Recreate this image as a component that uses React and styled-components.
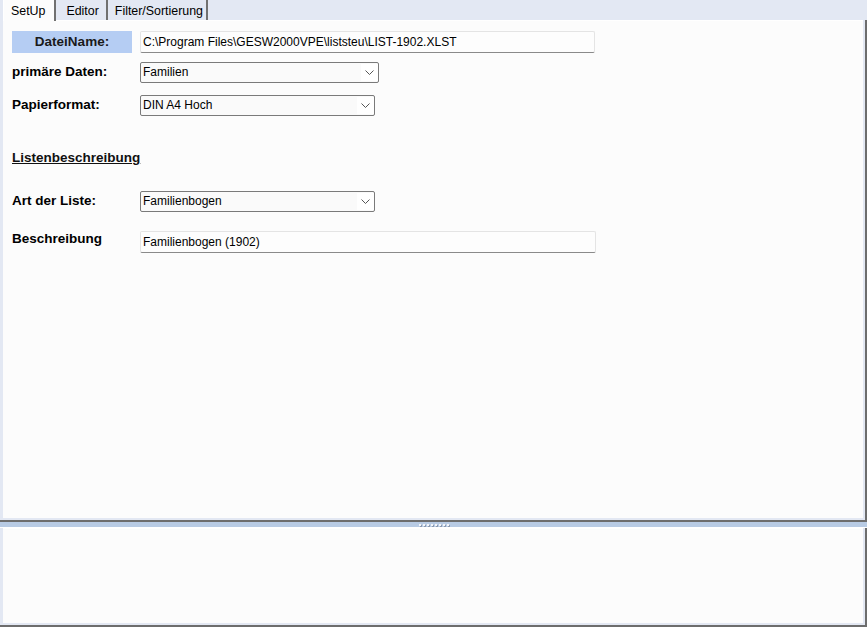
import React from "react";
import styled, { createGlobalStyle } from "styled-components";

const Global = createGlobalStyle`
  html, body { margin: 0; padding: 0; background: #e3e8f3; }
  body { font-family: "Liberation Sans", Arial, sans-serif; }
`;

const Window = styled.div`
  width: 867px;
  height: 627px;
  background: #e3e8f3;
  display: flex;
  flex-direction: column;
  overflow: hidden;
  font-family: "Liberation Sans", Arial, sans-serif;
  color: #000;
`;

const TabBar = styled.div`
  height: 20px;
  display: flex;
  align-items: stretch;
  padding-left: 3px;
  flex: none;
`;

const Tab = styled.div`
  position: relative;
  font-size: 12.4px;
  line-height: 20px;
  padding: 1px ${(p) => p.$pad}px 0 ${(p) => p.$padL}px;
  height: ${(p) => (p.$active ? 21 : 20)}px;
  background: ${(p) => (p.$active ? "#fcfcfc" : "transparent")};
  border-left: 1px solid ${(p) => (p.$active ? "#ffffff" : "transparent")};
  border-right: 2px solid #707070;
  margin-right: 1px;
  z-index: ${(p) => (p.$active ? 2 : 1)};
  box-sizing: border-box;
`;

const Frame = styled.div`
  flex: none;
  height: ${(p) => p.$h}px;
  border-right: 2px solid #6d6d6d;
  border-bottom: 2px solid #6d6d6d;
  padding: 0 2px 2px 3px;
  box-sizing: border-box;
  display: flex;
  background: #e3e8f3;
`;

const Panel = styled.div`
  flex: 1;
  background: #fcfcfc;
  border-top: 1px solid #ffffff;
  box-sizing: border-box;
  padding: 10px 0 0 9px;
  display: flex;
  flex-direction: column;
  align-items: flex-start;
`;

const Splitter = styled.div`
  flex: none;
  height: 5px;
  background: #b8cbe4;
  display: flex;
  justify-content: center;
  align-items: center;
  border-bottom: 1px solid #ffffff;
`;

const Grip = styled.div`
  display: flex;
  gap: 2px;
`;

const Dot = styled.span`
  width: 2px;
  height: 2px;
  background: #f4f6fa;
  box-shadow: 1px 1px 0 #8c9ab0;
`;

const Row = styled.div`
  display: flex;
  align-items: flex-start;
  margin-top: ${(p) => p.$mt || 0}px;
`;

const Label = styled.div`
  width: 128px;
  font-size: 13.5px;
  font-weight: bold;
  line-height: 16px;
  padding-top: ${(p) => p.$pt ?? 2}px;
  flex: none;
  white-space: nowrap;
`;

const NameLabel = styled.div`
  width: 120px;
  height: 22px;
  margin-right: 8px;
  background: #b5cdf3;
  font-size: 13.5px;
  font-weight: bold;
  line-height: 22px;
  text-align: center;
  color: #1a1a1a;
  flex: none;
`;

const TextField = styled.div`
  width: ${(p) => p.$w}px;
  height: 22px;
  box-sizing: border-box;
  background: #fdfdfd;
  border: 1px solid #e4e4e4;
  border-bottom: 1px solid #8a8a8a;
  border-radius: 2px;
  font-size: 12px;
  line-height: 20px;
  padding-left: 2px;
  white-space: nowrap;
`;

const Select = styled.div`
  width: ${(p) => p.$w}px;
  height: 21px;
  box-sizing: border-box;
  background: #fafafa;
  border: 1px solid #7a7a7a;
  border-radius: 2px;
  font-size: 12px;
  line-height: 19px;
  padding-left: 2px;
  display: flex;
  justify-content: space-between;
  align-items: stretch;
`;

const Arrow = styled.div`
  width: 17px;
  background: #ffffff;
  display: flex;
  align-items: center;
  justify-content: center;
  margin: 1px 0;
`;

const Heading = styled.div`
  margin-top: ${(p) => p.$mt}px;
  font-size: 13.5px;
  font-weight: bold;
  text-decoration: underline;
  line-height: 16px;
  color: #111;
`;

const Chevron = () => (
  <svg width="9" height="5" viewBox="0 0 9 5">
    <path d="M0.5 0.5 L4.5 4.5 L8.5 0.5" fill="none" stroke="#555" strokeWidth="1" />
  </svg>
);

export default function App() {
  return (
    <Window>
      <Global />
      <TabBar>
        <Tab $active $padL={7} $pad={9}>SetUp</Tab>
        <Tab $padL={8} $pad={7}>Editor</Tab>
        <Tab $padL={5} $pad={3}>Filter/Sortierung</Tab>
      </TabBar>
      <Frame $h={502}>
        <Panel>
          <Row>
            <NameLabel>DateiName:</NameLabel>
            <TextField $w={455}>C:\Program Files\GESW2000VPE\liststeu\LIST-1902.XLST</TextField>
          </Row>
          <Row $mt={9}>
            <Label>primäre Daten:</Label>
            <Select $w={239}>
              <span>Familien</span>
              <Arrow><Chevron /></Arrow>
            </Select>
          </Row>
          <Row $mt={12}>
            <Label>Papierformat:</Label>
            <Select $w={235}>
              <span>DIN A4 Hoch</span>
              <Arrow><Chevron /></Arrow>
            </Select>
          </Row>
          <Heading $mt={34}>Listenbeschreibung</Heading>
          <Row $mt={25}>
            <Label>Art der Liste:</Label>
            <Select $w={235}>
              <span>Familienbogen</span>
              <Arrow><Chevron /></Arrow>
            </Select>
          </Row>
          <Row $mt={19}>
            <Label $pt={0}>Beschreibung</Label>
            <TextField $w={456}>Familienbogen (1902)</TextField>
          </Row>
        </Panel>
      </Frame>
      <Splitter>
        <Grip>
          {Array.from({ length: 8 }).map((_, i) => (
            <Dot key={i} />
          ))}
        </Grip>
      </Splitter>
      <Frame $h={99}>
        <Panel />
      </Frame>
    </Window>
  );
}
